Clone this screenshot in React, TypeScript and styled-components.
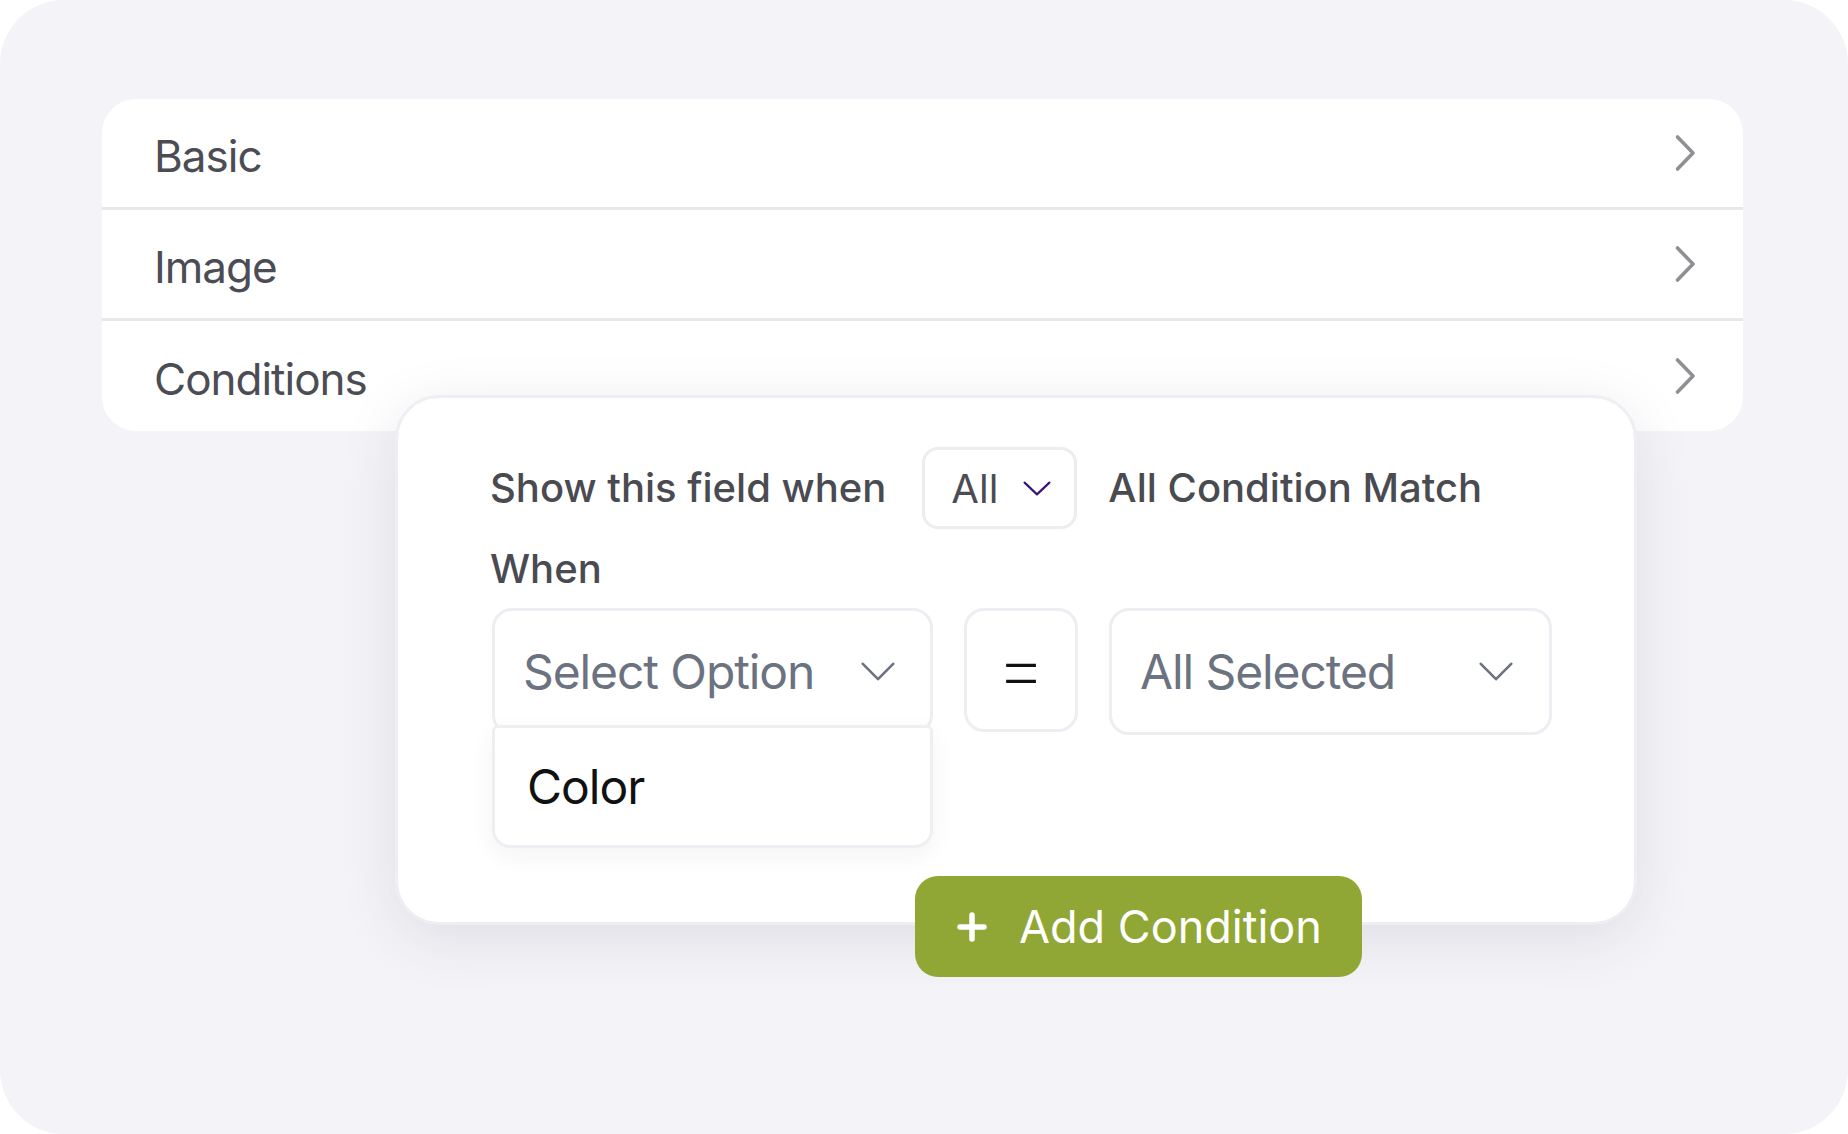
import React from "react";
import styled, { createGlobalStyle } from "styled-components";

const GlobalStyle = createGlobalStyle`
  html, body { margin: 0; padding: 0; background: #ffffff; }
  body { font-family: Inter, "Noto Sans", "Liberation Sans", sans-serif; }
  * { box-sizing: border-box; }
`;

const Stage = styled.div`
  position: relative;
  width: 1848px;
  height: 1134px;
  background: #f4f4f8;
  border-radius: 64px;
  padding: 99px 105px 0 102px;
  overflow: hidden;
`;

const Accordion = styled.div`
  width: 1641px;
  background: #ffffff;
  border-radius: 34px;
  overflow: hidden;
  display: flex;
  flex-direction: column;
`;

const Row = styled.div<{ $last?: boolean }>`
  height: ${(p) => (p.$last ? "110px" : "111px")};
  display: flex;
  align-items: center;
  justify-content: space-between;
  padding: 0 47px 0 52px;
  border-bottom: ${(p) => (p.$last ? "none" : "3px solid #e7e7ec")};
`;

const RowLabel = styled.span`
  font-size: 44px;
  line-height: 52px;
  letter-spacing: -1px;
  padding-top: 6px;
  color: #4c4c54;
  font-weight: 400;
`;

const Panel = styled.div`
  position: absolute;
  left: 395px;
  top: 395px;
  width: 1242px;
  height: 530px;
  background: #ffffff;
  border: 3px solid #eeeef4;
  border-radius: 44px;
  box-shadow: 0 14px 60px rgba(30, 30, 60, 0.1);
  padding: 49px 0 0 92px;
  display: flex;
  flex-direction: column;
  align-items: flex-start;
`;

const MatchRow = styled.div`
  display: flex;
  align-items: center;
  gap: 31px;
`;

const Label = styled.span`
  font-size: 40px;
  line-height: 48px;
  font-weight: 500;
  color: #4a4a51;
`;

const LeadLabel = styled(Label)`
  margin-right: 5px;
`;

const WhenLabel = styled(Label)`
  margin-top: 16px;
`;

const SmallSelect = styled.div`
  width: 155px;
  height: 82px;
  border: 3px solid #ececf1;
  border-radius: 16px;
  display: flex;
  align-items: center;
  justify-content: space-between;
  padding: 0 23px 0 26px;
  font-size: 40px;
  color: #4c4c54;
`;

const FieldRow = styled.div`
  margin-top: 15px;
  margin-left: 2px;
  display: flex;
  align-items: flex-start;
  gap: 31px;
`;

const SelectBox = styled.div<{ $w: number }>`
  position: relative;
  width: ${(p) => p.$w}px;
  height: 127px;
  border: 3px solid #ededf2;
  border-radius: 20px;
  display: flex;
  align-items: center;
  justify-content: space-between;
  padding: 0 ${(p) => (p.$w > 442 ? 36 : 35)}px 0 28px;
  font-size: 48px;
  letter-spacing: -1.1px;
  color: #6b7280;
`;

const EqualBox = styled.div`
  width: 114px;
  height: 124px;
  border: 3px solid #ededf2;
  border-radius: 20px;
  display: flex;
  align-items: center;
  justify-content: center;
  font-size: 80px;
  font-weight: 200;
  color: #111111;
  line-height: 1;
  padding-bottom: 6px;
`;

const Menu = styled.div`
  position: absolute;
  top: 114px;
  left: -3px;
  width: 441px;
  height: 123px;
  background: #ffffff;
  border: 3px solid #efeff3;
  border-radius: 6px 6px 18px 18px;
  box-shadow: 0 8px 24px rgba(30, 30, 60, 0.05);
  display: flex;
  align-items: center;
  padding: 0 0 0 32px;
`;

const MenuItem = styled.span`
  font-size: 48px;
  letter-spacing: -1px;
  color: #111111;
`;

const AddButton = styled.button`
  margin-top: 141px;
  margin-left: 425px;
  width: 447px;
  height: 101px;
  background: #91a735;
  border: none;
  border-radius: 23px;
  display: flex;
  align-items: center;
  gap: 32px;
  padding: 0 0 0 42px;
  color: #ffffff;
  font-family: Inter, "Noto Sans", "Liberation Sans", sans-serif;
  font-size: 45px;
  font-weight: 400;
  cursor: pointer;
  flex-shrink: 0;
`;

const ChevronRight = () => (
  <svg width="22" height="38" viewBox="0 0 22 38" fill="none">
    <path
      d="M3.5 3 L19 19 L3.5 35"
      stroke="#8f8f94"
      strokeWidth="3.6"
      strokeLinecap="round"
      strokeLinejoin="round"
    />
  </svg>
);

const ChevronDown = ({ w, h, color, sw }: { w: number; h: number; color: string; sw: number }) => (
  <svg width={w} height={h} viewBox={`0 0 ${w} ${h}`} fill="none">
    <path
      d={`M${sw / 2 + 0.5} ${sw / 2 + 0.5} L${w / 2} ${h - sw / 2 - 0.5} L${w - sw / 2 - 0.5} ${sw / 2 + 0.5}`}
      stroke={color}
      strokeWidth={sw}
      strokeLinecap="round"
      strokeLinejoin="round"
    />
  </svg>
);

const PlusIcon = () => (
  <svg width="30" height="30" viewBox="0 0 30 30" fill="none">
    <path d="M15 3 V27 M3 15 H27" stroke="#ffffff" strokeWidth="5.5" strokeLinecap="round" />
  </svg>
);

const sections = ["Basic", "Image", "Conditions"];

export default function App() {
  return (
    <>
      <GlobalStyle />
      <Stage>
        <Accordion>
          {sections.map((s, i) => (
            <Row key={s} $last={i === sections.length - 1}>
              <RowLabel>{s}</RowLabel>
              <ChevronRight />
            </Row>
          ))}
        </Accordion>
        <Panel>
          <MatchRow>
            <LeadLabel>Show this field when</LeadLabel>
            <SmallSelect>
              <span>All</span>
              <ChevronDown w={28} h={15} color="#3a167c" sw={2.2} />
            </SmallSelect>
            <Label>All Condition Match</Label>
          </MatchRow>
          <WhenLabel>When</WhenLabel>
          <FieldRow>
            <SelectBox $w={441}>
              <span>Select Option</span>
              <ChevronDown w={34} h={19} color="#6b7280" sw={2.6} />
              <Menu>
                <MenuItem>Color</MenuItem>
              </Menu>
            </SelectBox>
            <EqualBox>=</EqualBox>
            <SelectBox $w={443}>
              <span>All Selected</span>
              <ChevronDown w={34} h={19} color="#6b7280" sw={2.6} />
            </SelectBox>
          </FieldRow>
          <AddButton>
            <PlusIcon />
            <span>Add Condition</span>
          </AddButton>
        </Panel>
      </Stage>
    </>
  );
}
